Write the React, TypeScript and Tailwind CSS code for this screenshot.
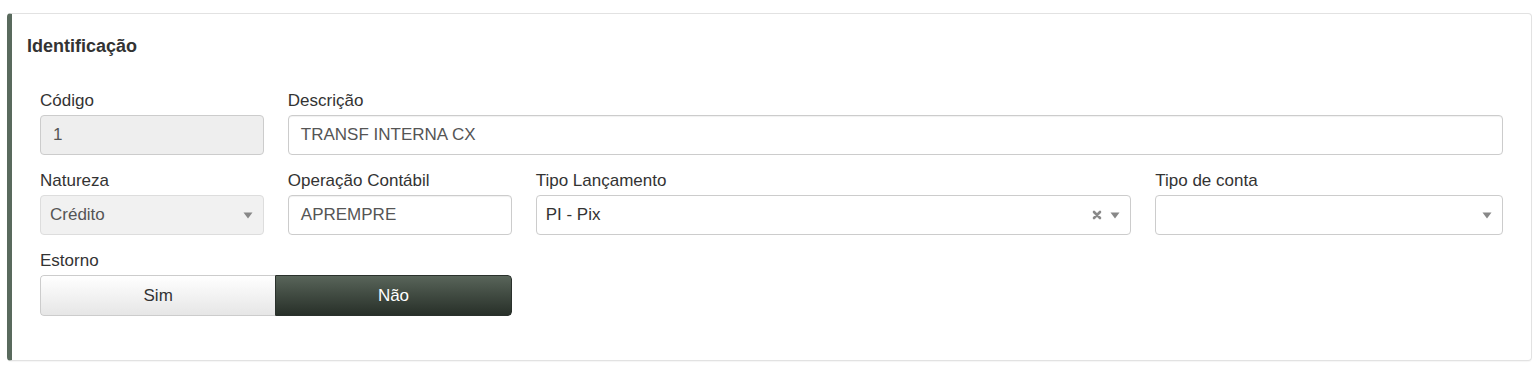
import React from "react";

const font = { fontFamily: '"Liberation Sans", Arial, sans-serif' };

function Label({ children }: { children: React.ReactNode }) {
  return <div className="h-5 mb-1 text-[17px] leading-5 text-[#333]">{children}</div>;
}

function Caret() {
  return (
    <svg width="10" height="7" viewBox="0 0 10 7" className="shrink-0">
      <path d="M0.5 0.5h9L5 6.5z" fill="#888" />
    </svg>
  );
}

function Clear() {
  return (
    <svg width="10" height="10" viewBox="0 0 10 10" className="shrink-0">
      <path d="M2 2l6 6M8 2l-6 6" stroke="#8a8a8a" strokeWidth="2.6" strokeLinecap="round" />
    </svg>
  );
}

export default function App() {
  return (
    <div className="bg-white min-h-screen pt-[13px] pl-[7px] pr-2" style={font}>
      <div className="border border-[#e2e2e2] border-l-[5px] border-l-[#596a5d] rounded-[4px] shadow-[0_1px_1px_rgba(0,0,0,0.04)] h-[348px]">
        {/* cabeçalho */}
        <div className="pt-5 pl-[15px] h-6 box-content text-[18px] leading-6 font-bold text-[#333]">
          Identificação
        </div>

        <div className="px-7 pt-[33px] grid grid-cols-12 gap-x-6">
          <div className="col-span-2 mb-4">
            <Label>Código</Label>
            <div className="h-10 rounded-[4px] border border-[#ccc] bg-[#eee] px-3 flex items-center text-[17px] text-[#555]">
              1
            </div>
          </div>
          <div className="col-span-10 mb-4">
            <Label>Descrição</Label>
            <div className="h-10 rounded-[4px] border border-[#ccc] bg-white px-3 flex items-center text-[17px] text-[#555] shadow-[inset_0_1px_1px_rgba(0,0,0,0.06)]">
              TRANSF INTERNA CX
            </div>
          </div>

          <div className="col-span-2 mb-4">
            <Label>Natureza</Label>
            <div className="h-10 rounded-[4px] border border-[#ddd] bg-[#f1f1f1] pl-[9px] pr-[10px] flex items-center justify-between text-[17px] text-[#555]">
              <span>Crédito</span>
              <Caret />
            </div>
          </div>
          <div className="col-span-2 mb-4">
            <Label>Operação Contábil</Label>
            <div className="h-10 rounded-[4px] border border-[#ccc] bg-white px-3 flex items-center text-[17px] text-[#555] shadow-[inset_0_1px_1px_rgba(0,0,0,0.06)]">
              APREMPRE
            </div>
          </div>
          <div className="col-span-5 mb-4">
            <Label>Tipo Lançamento</Label>
            <div className="h-10 rounded-[4px] border border-[#ccc] bg-white pl-[9px] pr-[10px] flex items-center text-[17px] text-[#333]">
              <span className="flex-1">PI - Pix</span>
              <div className="flex items-center gap-2">
                <Clear />
                <Caret />
              </div>
            </div>
          </div>
          <div className="col-span-3 mb-4">
            <Label>Tipo de conta</Label>
            <div className="h-10 rounded-[4px] border border-[#ccc] bg-white pl-[9px] pr-[10px] flex items-center justify-end">
              <Caret />
            </div>
          </div>

          <div className="col-span-4">
            <Label>Estorno</Label>
            <div className="flex h-[41px] rounded-[4px] overflow-hidden text-[17px]">
              <button className="flex-1 border border-r-0 border-[#ccc] rounded-l-[4px] bg-gradient-to-b from-white to-[#e6e6e6] text-[#333]">
                Sim
              </button>
              <button className="flex-1 border border-[#2a312c] rounded-r-[4px] bg-gradient-to-b from-[#59655a] to-[#283029] text-white">
                Não
              </button>
            </div>
          </div>
        </div>
      </div>
    </div>
  );
}
